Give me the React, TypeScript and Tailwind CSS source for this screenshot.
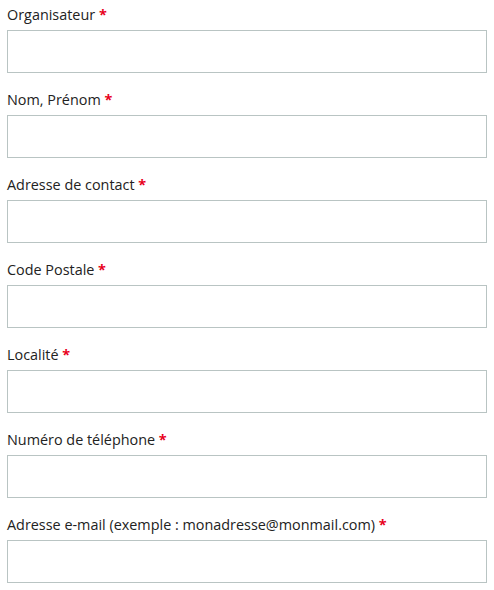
import React from "react";

const fields = [
  "Organisateur",
  "Nom, Prénom",
  "Adresse de contact",
  "Code Postale",
  "Localité",
  "Numéro de téléphone",
  "Adresse e-mail (exemple : monadresse@monmail.com)",
];

const App = () => {
  return (
    <div
      className="bg-white w-[494px] h-[590px] pt-[4px] px-[7px]"
      style={{ fontFamily: '"Open Sans", "DejaVu Sans", sans-serif' }}
    >
      {fields.map((label) => (
        <div key={label} className="mb-[16px] w-[480px]">
          <label className="block h-[22px] leading-[22px] text-[14.4px] text-[#222]">
            {label} <span className="text-[#e8001c] font-bold">*</span>
          </label>
          <input
            type="text"
            className="block mt-[4px] w-[480px] h-[43px] border border-[#b9c4c3] bg-white outline-none"
          />
        </div>
      ))}
    </div>
  );
};

export default App;
